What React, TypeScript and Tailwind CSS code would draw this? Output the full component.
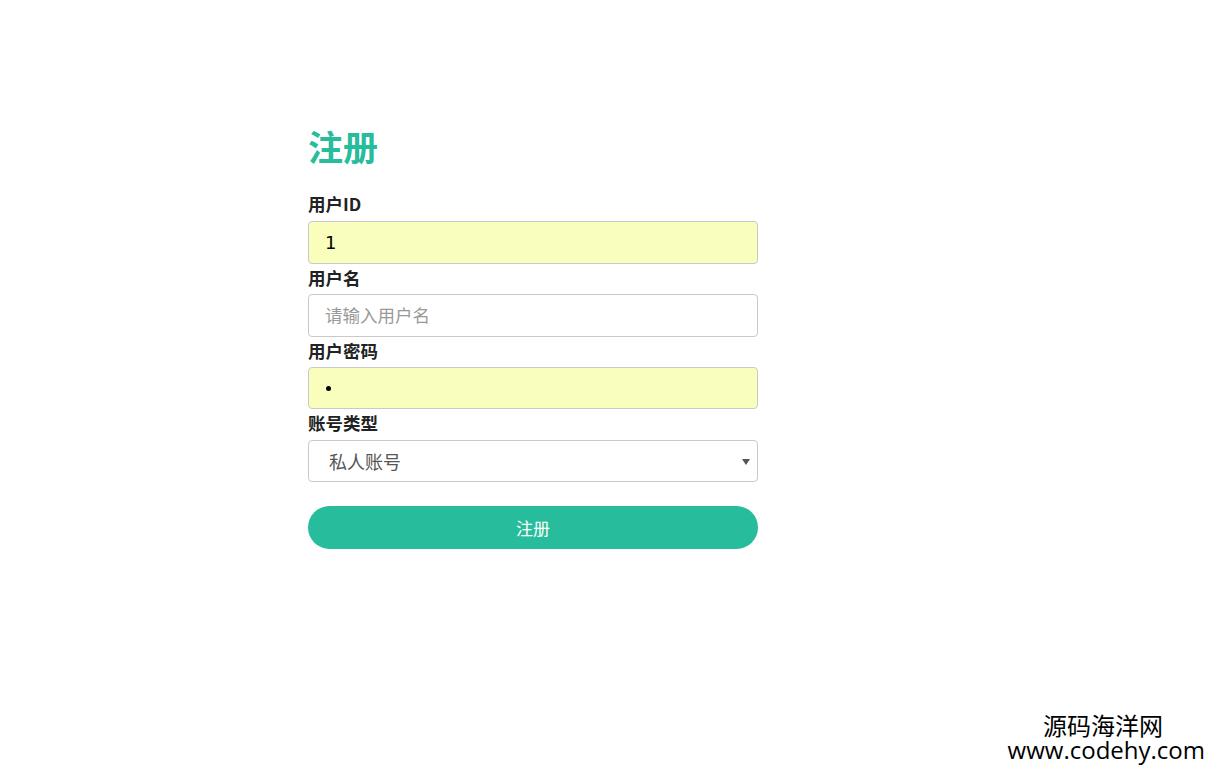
import React from "react";

const cjk = '"Noto Sans CJK SC", "Liberation Sans", sans-serif';

export default function App() {
  return (
    <div className="relative w-full h-[769px] bg-white overflow-hidden" style={{ fontFamily: cjk }}>
      <div className="w-[450px] ml-[308px] pt-[122px]">
        <h1 className="text-[35px] leading-[48px] font-bold text-[#26bc9c] mb-[22px]">注册</h1>
        <label className="block text-[17.5px] leading-[24px] font-bold text-[#222] mb-[5px]">用户ID</label>
        <div className="h-[43px] w-full rounded-[4px] border border-[#c9c9c9] bg-[#fafebd] flex items-center px-[16px]">
          <span className="text-[18px] text-black" style={{ fontFamily: '"DejaVu Sans", sans-serif' }}>1</span>
        </div>
        <label className="block text-[17.5px] leading-[24px] font-bold text-[#222] mt-[2px] mb-[4px]">用户名</label>
        <div className="h-[43px] w-full rounded-[4px] border border-[#c9c9c9] bg-white flex items-center px-[16px]">
          <span className="text-[17.5px] text-[#999]">请输入用户名</span>
        </div>
        <label className="block text-[17.5px] leading-[24px] font-bold text-[#222] mt-[2px] mb-[4px]">用户密码</label>
        <div className="h-[42px] w-full rounded-[4px] border border-[#c9c9c9] bg-[#fafebd] flex items-center px-[16px]">
          <span className="w-[5px] h-[5px] rounded-full bg-black inline-block ml-[1px]"></span>
        </div>
        <label className="block text-[17.5px] leading-[24px] font-bold text-[#222] mt-[2px] mb-[5px]">账号类型</label>
        <div className="h-[42px] w-full rounded-[4px] border border-[#c9c9c9] bg-white flex items-center justify-between pl-[20px] pr-[7px]">
          <span className="text-[18px] text-[#555]">私人账号</span>
          <svg width="8" height="7" viewBox="0 0 8 7"><path d="M0 1 L8 1 L4 7 Z" fill="#555" /></svg>
        </div>
        <button className="mt-[24px] h-[43px] w-full rounded-full bg-[#27bd9c] text-white text-[17px] flex items-center justify-center">注册</button>
      </div>
      <div className="absolute right-[4px] bottom-[6px] flex flex-col items-end text-black">
        <div className="text-[24px] leading-[24px] mr-[42px]">源码海洋网</div>
        <div className="text-[24px] leading-[26px]" style={{ fontFamily: '"Open Sans", sans-serif' }}>www.codehy.com</div>
      </div>
    </div>
  );
}
